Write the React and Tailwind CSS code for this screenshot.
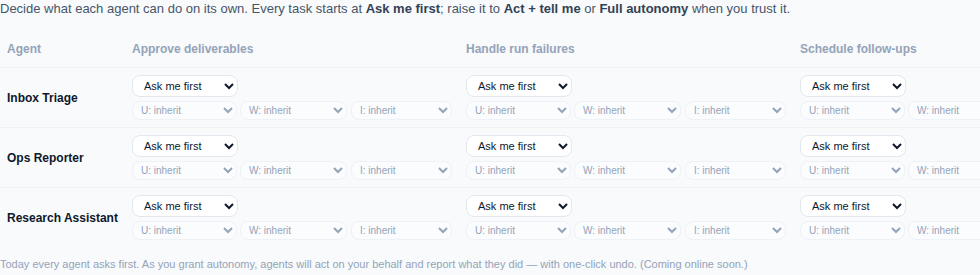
import React from 'react';

const agents = ['Inbox Triage', 'Ops Reporter', 'Research Assistant'];
const tasks = ['Approve deliverables', 'Handle run failures', 'Schedule follow-ups'];
const levels = ['Ask me first', 'Act + tell me', 'Full autonomy'];

const scopes = [
    { key: 'U', width: 'w-[105px]', gap: '' },
    { key: 'W', width: 'w-[107px]', gap: 'ml-[3px]' },
    { key: 'I', width: 'w-[101px]', gap: 'ml-[4px]' },
];

const TaskCell = ({ last }) => (
    <div className={`px-[7px] pt-[7px] pb-[7px] flex flex-col items-start gap-[4px] ${last ? '' : 'border-b border-[#eef2f6]'}`}>
        <select
            defaultValue={levels[0]}
            className="w-[106px] h-[22px] pl-[7px] text-[11px] text-[#0f172a] bg-white border border-[#e2e8f0] rounded-lg"
        >
            {levels.map((l) => (
                <option key={l}>{l}</option>
            ))}
        </select>
        <div className="flex">
            {scopes.map((s) => (
                <select
                    key={s.key}
                    defaultValue="inherit"
                    className={`${s.width} ${s.gap} h-[19px] pl-[4px] text-[10px] text-[#94a3b8] bg-[#fbfcfe] border border-[#eef2f6] rounded-lg`}
                >
                    <option value="inherit">{s.key}: inherit</option>
                    {levels.map((l) => (
                        <option key={l}>{s.key}: {l}</option>
                    ))}
                </select>
            ))}
        </div>
    </div>
);

const App = () => {
    return (
        <div className="min-h-screen bg-[#f8fafc] font-['Liberation_Sans',Arial,sans-serif] overflow-hidden">
            <p className="text-[13px] leading-[18px] text-[#475569] whitespace-nowrap">
                Decide what each agent can do on its own. Every task starts at{' '}
                <b className="text-[#334155]">Ask me first</b>; raise it to{' '}
                <b className="text-[#334155]">Act + tell me</b> or{' '}
                <b className="text-[#334155]">Full autonomy</b> when you trust it.
            </p>

            <div className="mt-[14px] grid grid-cols-[125px_334px_334px_334px] w-max">
                {/* header */}
                <div className="px-[7px] py-[10px] text-[12px] leading-[15px] font-bold text-[#94a3b8] border-b border-[#eef2f6]">
                    Agent
                </div>
                {tasks.map((t) => (
                    <div
                        key={t}
                        className="px-[7px] py-[10px] text-[12px] leading-[15px] font-bold text-[#94a3b8] border-b border-[#eef2f6]"
                    >
                        {t}
                    </div>
                ))}

                {agents.map((a, i) => {
                    const last = i === agents.length - 1;
                    return (
                        <React.Fragment key={a}>
                            <div
                                className={`px-[7px] flex items-center text-[12px] font-bold text-[#0f172a] whitespace-nowrap ${last ? '' : 'border-b border-[#eef2f6]'}`}
                            >
                                {a}
                            </div>
                            {tasks.map((t) => (
                                <TaskCell key={t} last={last} />
                            ))}
                        </React.Fragment>
                    );
                })}
            </div>

            <p className="mt-[10px] text-[11px] leading-[15px] text-[#94a3b8] whitespace-nowrap">
                Today every agent asks first. As you grant autonomy, agents will act on your behalf and report what they did — with one-click undo. (Coming online soon.)
            </p>
        </div>
    );
};

export default App;
